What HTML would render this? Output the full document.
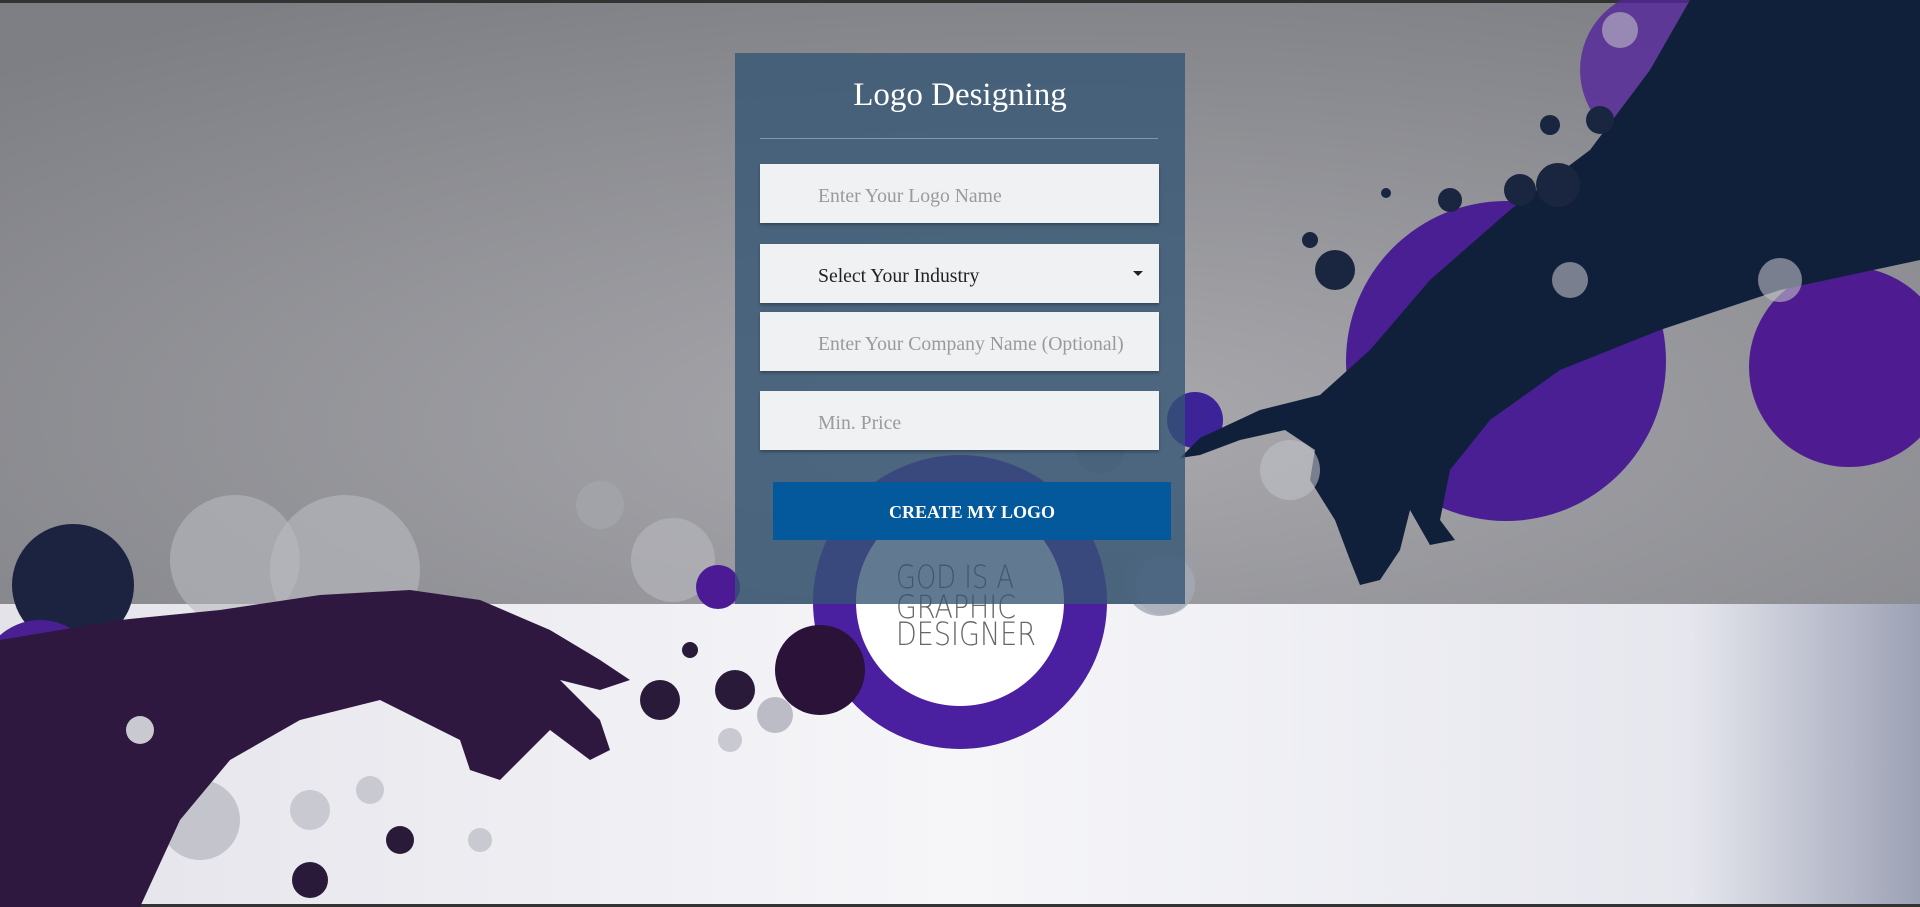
<!DOCTYPE html>
<html><head><meta charset="utf-8"><style>
html,body{margin:0;padding:0;width:1920px;height:907px;overflow:hidden;font-family:"Liberation Serif",serif}
#bg{position:absolute;left:0;top:0;width:1920px;height:907px}
.panel{position:absolute;left:735px;top:53px;width:450px;height:551px;background:rgba(52,85,115,0.78)}
h1{position:absolute;width:450px;top:75px;margin:0;text-align:center;color:#fff;font-weight:normal;font-size:33px;line-height:40px;left:735px}
.line{position:absolute;left:760px;top:138px;width:398px;height:1px;background:#8098ad}
.inp{position:absolute;left:760px;width:399px;height:59px;background:#eff1f3;box-shadow:0 2px 3px rgba(0,0,0,.3);color:#9a9a9a;font-size:19.7px;line-height:64px;padding-left:58px;box-sizing:border-box}
.sel{color:#222}
.caret{position:absolute;right:16px;top:27px;width:0;height:0;border-left:5px solid transparent;border-right:5px solid transparent;border-top:5px solid #222}
.btn{position:absolute;left:773px;top:482px;width:398px;height:58px;background:#03599c;color:#fff;font-weight:bold;font-size:18px;line-height:60px;text-align:center}
</style></head><body>
<svg id="bg" width="1920" height="907" viewBox="0 0 1920 907">
<defs>
<radialGradient id="tg" cx="0.55" cy="0.7" r="0.8"><stop offset="0" stop-color="#a9a9ae"/><stop offset="1" stop-color="#7e7f84"/></radialGradient>
<linearGradient id="bgr" x1="0" x2="1" y1="0" y2="0"><stop offset="0" stop-color="#e4e3ea"/><stop offset="0.5" stop-color="#f6f6f9"/><stop offset="0.88" stop-color="#e6e7ee"/><stop offset="1" stop-color="#9ca1b4"/></linearGradient>
</defs>
<rect width="1920" height="604" fill="url(#tg)"/>
<rect y="604" width="1920" height="303" fill="url(#bgr)"/>
<rect width="1920" height="3" fill="#333"/>
<rect y="904" width="1920" height="3" fill="#333"/>
<circle cx="1506" cy="361" r="160" fill="#4a1f93"/>
<circle cx="1849" cy="367" r="100" fill="#4e1c90"/>
<circle cx="1660" cy="70" r="80" fill="#55269a" opacity=".8"/>
<circle cx="1800" cy="120" r="140" fill="#1d2240"/>
<circle cx="1870" cy="40" r="80" fill="#1a2a50"/>
<circle cx="1195" cy="420" r="28" fill="#3d2398"/>
<circle cx="1100" cy="450" r="24" fill="#8d8f99" opacity=".7"/>
<circle cx="1160" cy="580" r="36" fill="#9aa0ad" opacity=".7"/>
<path d="M1920 0 L1920 260 L1780 290 L1660 330 L1560 370 L1490 420 L1450 470 L1440 520 L1455 540 L1430 545 L1410 510 L1400 550 L1380 580 L1360 585 L1350 560 L1335 520 L1310 480 L1315 450 L1285 430 L1240 440 L1200 455 L1180 458 L1200 438 L1260 410 L1320 395 L1370 350 L1430 280 L1510 210 L1590 150 L1650 70 L1690 0 Z" fill="#10203a"/>
<g fill="#1a2540"><circle cx="1520" cy="190" r="16"/><circle cx="1558" cy="185" r="22"/><circle cx="1600" cy="120" r="14"/><circle cx="1550" cy="125" r="10"/><circle cx="1335" cy="270" r="20"/><circle cx="1310" cy="240" r="8"/><circle cx="1450" cy="200" r="12"/><circle cx="1386" cy="193" r="5"/></g>
<g fill="#bfc0c8" opacity=".6"><circle cx="1570" cy="280" r="18"/><circle cx="1290" cy="470" r="30"/><circle cx="1620" cy="30" r="18"/><circle cx="1780" cy="280" r="22"/></g>
<circle cx="960" cy="602" r="147" fill="#4a1fa0"/>
<circle cx="960" cy="602" r="104" fill="#fff"/>
<g font-family="DejaVu Sans,sans-serif" font-weight="200" font-size="32" fill="#666">
<text x="896" y="588" textLength="118" lengthAdjust="spacingAndGlyphs">GOD IS A</text>
<text x="896" y="618" textLength="120" lengthAdjust="spacingAndGlyphs">GRAPHIC</text>
<text x="896" y="645" textLength="140" lengthAdjust="spacingAndGlyphs">DESIGNER</text>
</g>
<circle cx="820" cy="670" r="45" fill="#2a1238"/>
<circle cx="775" cy="715" r="18" fill="#bbbcc5"/>
<circle cx="1165" cy="585" r="30" fill="#a8acb8" opacity=".6"/>
<circle cx="73" cy="585" r="61" fill="#1c2340"/>
<circle cx="345" cy="570" r="75" fill="#b4b5bb" opacity=".7"/>
<circle cx="235" cy="560" r="65" fill="#b8b9c0" opacity=".6"/>
<circle cx="673" cy="560" r="42" fill="#b3b4bb" opacity=".7"/>
<circle cx="600" cy="505" r="24" fill="#a5a6ad" opacity=".7"/>
<circle cx="718" cy="587" r="22" fill="#4d1a96"/>
<circle cx="40" cy="680" r="60" fill="#4a1f93"/>
<circle cx="100" cy="800" r="70" fill="#24203c"/>
<circle cx="40" cy="860" r="50" fill="#4a1f93"/>
<circle cx="200" cy="820" r="40" fill="#c3c4cc"/>
<path d="M0 640 L120 620 L220 610 L320 595 L410 590 L480 600 L550 630 L600 660 L630 680 L600 690 L560 680 L600 720 L610 750 L590 760 L550 730 L520 760 L500 780 L470 770 L460 740 L420 720 L380 700 L300 720 L230 760 L180 820 L140 907 L0 907 Z" fill="#2f1840"/>
<g fill="#2a1a3a"><circle cx="660" cy="700" r="20"/><circle cx="735" cy="690" r="20"/><circle cx="690" cy="650" r="8"/><circle cx="400" cy="840" r="14"/><circle cx="310" cy="880" r="18"/></g>
<g fill="#c8c9d1"><circle cx="730" cy="740" r="12"/><circle cx="310" cy="810" r="20"/><circle cx="370" cy="790" r="14"/><circle cx="480" cy="840" r="12"/><circle cx="140" cy="730" r="14"/></g>
</svg>
<div class="panel"></div>
<h1>Logo Designing</h1>
<div class="line"></div>
<div class="inp" style="top:164px">Enter Your Logo Name</div>
<div class="inp sel" style="top:244px">Select Your Industry<div class="caret"></div></div>
<div class="inp" style="top:312px">Enter Your Company Name (Optional)</div>
<div class="inp" style="top:391px">Min. Price</div>
<div class="btn">CREATE MY LOGO</div>
</body></html>
